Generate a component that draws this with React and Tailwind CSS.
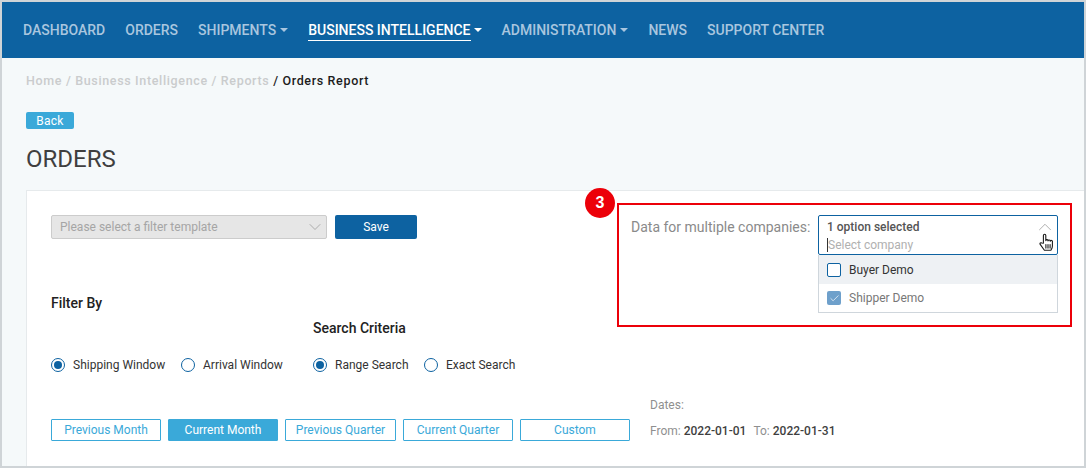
import React from "react";
import { ChevronDown, ChevronUp, Check } from "lucide-react";

const Caret = ({ c = "border-t-[#a9c6df]", m = "ml-[4px]" }) => (
  <span className={`${m} inline-block w-0 h-0 border-x-[4px] border-x-transparent border-t-[4px] ${c}`} />
);

const nav = [
  ["DASHBOARD", false, false],
  ["ORDERS", false, false],
  ["SHIPMENTS", true, false],
  ["BUSINESS INTELLIGENCE", true, true],
  ["ADMINISTRATION", true, false],
  ["NEWS", false, false],
  ["SUPPORT CENTER", false, false],
];

const Radio = ({ on, label, w }) => (
  <div className={`flex items-center ${w}`}>
    <span className="w-[14px] h-[14px] rounded-full border border-[#0d62a1] flex items-center justify-center shrink-0 bg-white">
      {on && <span className="w-[8px] h-[8px] rounded-full bg-[#0d62a1]" />}
    </span>
    <span className="ml-[8px] text-[12px] leading-none text-[#333]">{label}</span>
  </div>
);

const Btn = ({ label, on, w }) => (
  <div className={`${w} h-[22px] flex items-center justify-center text-[12px] rounded-[1px] border border-[#3aa9d9] ${on ? "bg-[#3aa9d9] text-white" : "bg-white text-[#3aa9d9]"}`}>
    {label}
  </div>
);

const Hand = ({ className }) => (
  <svg viewBox="0 0 15 18" width="15" height="18" className={className} fill="#ffffff" stroke="#1a1a1a" strokeWidth="1.1" strokeLinejoin="round" strokeLinecap="round">
    <path d="M4.4 10.2V2.4a1.2 1.2 0 0 1 2.4 0V7.6a1.1 1.1 0 0 1 2.2 0.3a1.1 1.1 0 0 1 2.2 0.4a1.1 1.1 0 0 1 2.2 0.6V13c0 2-.8 3-1.5 4.2H5.4L1.2 11.4c-.7-1 .6-2.2 1.6-1.4z" />
    <path d="M6.9 11.5v3.6M9 11.5v3.6M11.1 11.5v3.6" fill="none" />
  </svg>
);

export default function App() {
  return (
    <div className="w-[1086px] h-[468px] overflow-hidden border-2 border-[#cfd4d7] bg-[#f5f9fa] flex flex-col font-['Roboto',sans-serif]">
      <nav className="h-[56px] shrink-0 bg-[#0d62a1] flex items-center pl-[21px] gap-[20px] text-[14px] font-medium leading-none">
        {nav.map(([t, caret, active]) => (
          <div key={t} className={`flex items-center ${active ? "text-white" : "text-[#a9c6df]"}`}>
            <span className={active ? "border-b border-white pb-[3px] mt-[4px]" : ""}>{t}</span>
            {caret && <Caret m={active ? "ml-[3px]" : "ml-[4px]"} c={active ? "border-t-white" : "border-t-[#a9c6df]"} />}
          </div>
        ))}
      </nav>

      <div className="pl-[24px] flex-1 flex flex-col min-h-0">
        <div className="mt-[15px] text-[12.5px] leading-[16px] font-medium tracking-[0.052em] text-[#cacccd]">
          Home / Business Intelligence / Reports <span className="text-[#1c1c1c]">/ Orders Report</span>
        </div>
        <div className="mt-[23px] w-[48px] h-[17px] bg-[#3aa9d9] rounded-[2px] text-white text-[12px] leading-[18px] text-center tracking-[0.02em]">
          Back
        </div>
        <h1 className="mt-[17px] text-[24px] leading-[26px] font-normal text-[#3f3f3f]">ORDERS</h1>

        <div className="relative mt-[18px] flex-1 bg-white border-l border-t border-[#e6eaec] pl-[24px] pt-[24px] min-h-0">
          <div className="flex">
            <div className="w-[276px] h-[24px] bg-[#e6e6e6] border border-[#cccccc] rounded-[2px] flex items-center justify-between pl-[8px] pr-[1px] text-[12px] text-[#a5a5a5]">
              Please select a filter template
              <ChevronDown size={20} strokeWidth={1} className="text-[#a0a0a0]" />
            </div>
            <div className="ml-[8px] w-[82px] h-[24px] bg-[#0d62a1] rounded-[2px] text-white text-[12px] flex items-center justify-center">
              Save
            </div>
          </div>

          <div className="mt-[56px] h-[16px] text-[14px] leading-[16px] font-medium text-[#222]">Filter By</div>
          <div className="mt-[9px] ml-[262px] h-[16px] text-[14px] leading-[16px] font-medium text-[#222]">Search Criteria</div>

          <div className="mt-[22px] flex h-[14px]">
            <Radio on label="Shipping Window" w="w-[130px]" />
            <Radio label="Arrival Window" w="w-[132px]" />
            <Radio on label="Range Search" w="w-[111px]" />
            <Radio label="Exact Search" w="w-[120px]" />
          </div>

          <div className="mt-[26px] flex items-start">
            <div className="flex gap-[7px] mt-[21px]">
              <Btn label="Previous Month" w="w-[110px]" />
              <Btn on label="Current Month" w="w-[110px]" />
              <Btn label="Previous Quarter" w="w-[111px]" />
              <Btn label="Current Quarter" w="w-[110px]" />
              <Btn label="Custom" w="w-[110px]" />
            </div>
            <div className="ml-[20px] text-[12px] leading-[14px] text-[#8f8f8f]">
              <div>Dates:</div>
              <div className="mt-[12px]">
                From: <span className="font-medium text-[#3f3f3f]">2022-01-01</span>
                <span className="ml-[7px]">To:</span> <span className="font-medium text-[#3f3f3f]">2022-01-31</span>
              </div>
            </div>
          </div>

          {/* annotation */}
          <div className="absolute left-[590px] top-[12px] w-[455px] h-[124px] border-2 border-[#ec0009]" />
          <div className="absolute left-[558px] top-[-3px] w-[30px] h-[30px] rounded-full bg-[#ec0009] text-white font-bold text-[16px] flex items-center justify-center font-['Liberation_Sans',sans-serif]">
            3
          </div>

          <div className="absolute left-[604px] top-[24px] flex">
            <div className="w-[187px] text-[14px] leading-[24px] text-[#8a8a8a]">Data for multiple companies:</div>
            <div className="w-[240px]">
              <div className="relative h-[40px] border border-[#0d62a1] rounded-[2px] pl-[8px] bg-white">
                <div className="mt-[4px] text-[12px] leading-[14px] font-medium text-[#555]">1 option selected</div>
                <div className="mt-[4px] text-[12px] leading-[14px] text-[#b0b0b0] border-l border-[#333] w-fit">Select company</div>
                <ChevronUp size={22} strokeWidth={1} className="absolute right-[1px] top-[0px] text-[#a8a8a8]" />
                <Hand className="absolute right-[3px] top-[17px]" />
              </div>
              <div className="border-x border-b border-[#cfd6dc] bg-white">
                <div className="h-[29px] bg-[#eef1f4] flex items-center pl-[8px]">
                  <span className="w-[14px] h-[14px] rounded-[2px] border border-[#0d62a1] bg-white" />
                  <span className="ml-[8px] text-[12px] text-[#333]">Buyer Demo</span>
                </div>
                <div className="h-[28px] flex items-center pl-[8px]">
                  <span className="w-[14px] h-[14px] rounded-[2px] bg-[#6ea0cb] flex items-center justify-center">
                    <Check size={11} strokeWidth={1.5} className="text-white" />
                  </span>
                  <span className="ml-[8px] text-[12px] text-[#777]">Shipper Demo</span>
                </div>
              </div>
            </div>
          </div>
        </div>
      </div>
    </div>
  );
}
